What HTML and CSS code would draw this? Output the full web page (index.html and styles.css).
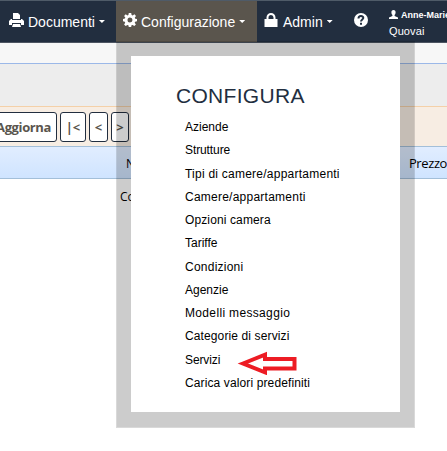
FILE: index.html
```html
<!DOCTYPE html>
<html lang="it">
<head>
<meta charset="utf-8">
<title>Configura</title>
<link rel="stylesheet" href="styles.css">
</head>
<body>
<header class="nav">
  <a class="item docs">
    <svg class="icon" width="15" height="14" viewBox="0 0 15 14"><path fill="#fff" d="M4 0h5l2 2v4H4zM2 6h1v1h9V6h1l2 2v4h-3v-2H3v2H0V8zM4 11h7l1 3H3z"/></svg>
    <span>Documenti</span><i class="caret"></i>
  </a>
  <a class="item config">
    <svg class="icon" width="14" height="14" viewBox="0 0 14 14"><path fill="#fff" fill-rule="evenodd" d="M5.800 0h2.400l.4 2 1.100.5L11.400 1.300l1.600 1.600-1.200 1.700.4 1.100 1.800.3v2.300l-1.900.4-.4 1 1.200 1.700-1.600 1.600-1.700-1.100-1.100.4-.4 1.900H5.800l-.4-1.900-1-.4-1.700 1.100-1.600-1.600 1.100-1.700-.4-1L0 8.200V5.900l1.900-.3.4-1.100L1.100 2.900l1.600-1.600 1.700 1.200 1-.5zM7 4.500a2.500 2.500 0 1 0 0 5 2.500 2.500 0 0 0 0-5z"/></svg>
    <span>Configurazione</span><i class="caret"></i>
  </a>
  <a class="item admin">
    <svg class="icon" width="14" height="14" viewBox="0 0 14 14"><path fill="#fff" fill-rule="evenodd" d="M2.500 6V4.500a4.500 4.500 0 0 1 9 0V6H13.500v8H.5V6zM4.500 6h5V4.500a2.500 2.500 0 0 0-5 0z"/></svg>
    <span>Admin</span><i class="caret"></i>
  </a>
  <a class="help">
    <svg class="icon" width="14" height="14" viewBox="0 0 14 14"><circle cx="7" cy="7" r="7" fill="#fff"/><path fill="none" stroke="#222e3f" stroke-width="2" d="M4.500 5.500C4.500 2.300 9.500 2.500 9.300 5 9.200 6.500 7 6.500 7 8.600M7 9.700v2"/></svg>
  </a>
  <div class="user">
    <div class="name"><svg width="9" height="9" viewBox="0 0 9 9"><path fill="#fff" d="M4.500 0C6 0 6.700 1 6.600 2.500 6.500 4 6 4.500 5.600 5v1L9 7.500V9H0V7.500L3.400 6V5C3 4.500 2.500 4 2.400 2.500 2.300 1 3 0 4.500 0z"/></svg><b>Anne-Marie</b></div>
    <div class="org">Quovai</div>
  </div>
</header>
<main>
  <div class="strip"></div>
  <div class="filters"></div>
  <div class="toolbar">
    <button class="refresh">Aggiorna</button><button class="first">|&lt;</button><button class="prev">&lt;</button><button class="next">&gt;</button>
  </div>
  <div class="row head"><span class="c1">Nome</span><span class="c2">Prezzo</span></div>
  <div class="row"><span class="c0">Codice</span></div>
</main>
<section class="menu">
  <div class="panel">
    <h2>CONFIGURA</h2>
    <ul>
      <li>Aziende</li>
      <li class="snug">Strutture</li>
      <li class="wide">Tipi di camere/appartamenti</li>
      <li class="wide">Camere/appartamenti</li>
      <li class="medium">Opzioni camera</li>
      <li>Tariffe</li>
      <li class="wide">Condizioni</li>
      <li>Agenzie</li>
      <li class="wider">Modelli messaggio</li>
      <li class="medium">Categorie di servizi</li>
      <li class="snug">Servizi</li>
      <li class="medium">Carica valori predefiniti</li>
    </ul>
  </div>
  <svg class="arrow" width="60" height="24" viewBox="0 0 60 24"><path fill="#fff" stroke="#ed1c24" stroke-width="4" d="M6 12.500 28 3.700V8H57.500V17.500H28V21.300z"/></svg>
</section>
</body>
</html>
```

FILE: styles.css
```css
* { box-sizing: border-box; }
body { margin: 0; width: 447px; height: 451px; overflow: hidden; position: relative; background: #fff; font-family: "Liberation Sans", Arial, sans-serif; color: #000; }
.nav { display: flex; height: 43px; background: #222e3f; border-top: 1px solid #4f5b68; border-bottom: 1px solid #4d5562; color: #fff; overflow: hidden; }
.item { display: flex; font-size: 14px; line-height: 16px; padding-top: 13px; white-space: nowrap; flex: none; }
.icon { flex: none; }
.docs { width: 116px; padding-left: 9px; }
.docs .icon { margin: -1px 4px 0 0; }
.config { width: 141px; padding-left: 7px; background: #5a554d; }
.config .icon { margin: -1px 4px 0 0; }
.admin { width: 97px; padding-left: 7px; }
.admin .icon { margin: -1px 5px 0 0; }
.caret { width: 6px; height: 3px; margin: 6px 0 0 4px; background: #fff; clip-path: polygon(0 0, 100% 0, 50% 100%); }
.help { width: 35px; padding-top: 12px; flex: none; }
.user { flex: none; width: 90px; }
.name { display: flex; gap: 3px; margin-top: 9px; height: 11px; font-size: 9px; line-height: 11px; white-space: nowrap; }
.org { font-size: 11px; line-height: 14px; margin-top: 3px; letter-spacing: .1px; }
main { font-family: "Open Sans", sans-serif; }
.strip { height: 21px; background: #f7f7f7; border-bottom: 1px solid #9bb8e8; }
.filters { height: 43px; background: #ededed; border-bottom: 1px solid #f4d0a8; }
.toolbar { display: flex; gap: 3px; height: 39px; padding-top: 5px; background: #f7ede3; }
.toolbar button { flex: none; height: 30px; padding: 0; border: 1px solid #222e3f; border-radius: 3px; background: #fff; color: #5a554d; font: bold 13px "Open Sans", sans-serif; }
.toolbar .refresh { width: 65px; margin-left: -8px; padding-right: 2px; letter-spacing: -.4px; }
.toolbar .first { width: 26px; }
.toolbar .prev { width: 19px; }
.toolbar .next { width: 18px; }
.row { display: flex; height: 33px; padding-top: 1px; font-size: 12px; line-height: 34px; white-space: nowrap; }
.head { background: linear-gradient(#e1edff, #cfe4ff); border: solid #a3bfd9; border-width: 1px 0; line-height: 31px; }
.c0 { margin-left: 120px; }
.c1 { margin-left: 126px; width: 283px; }
.c2 { font-size: 13px; letter-spacing: -.4px; }
.menu { position: absolute; left: 116px; top: 41px; width: 299px; height: 387px; padding: 14px 14px 15px; border: 1px solid rgba(0, 0, 0, .15); background: rgba(0, 0, 0, .2); background-clip: padding-box; }
.panel { height: 356px; background: #fff; padding: 27px 0 0 45px; }
h2 { margin: 0; font-weight: normal; font-size: 21px; line-height: 26px; letter-spacing: .3px; color: #222e3f; }
ul { list-style: none; margin: 7px 0 0 9px; padding: 0; font-size: 12px; line-height: 23.27px; }
li { height: 23.27px; white-space: nowrap; }
.snug { letter-spacing: -.1px; }
.medium { letter-spacing: .12px; }
.wide { letter-spacing: .24px; }
.wider { letter-spacing: .34px; }
.arrow { position: absolute; left: 120px; top: 309px; }
```
